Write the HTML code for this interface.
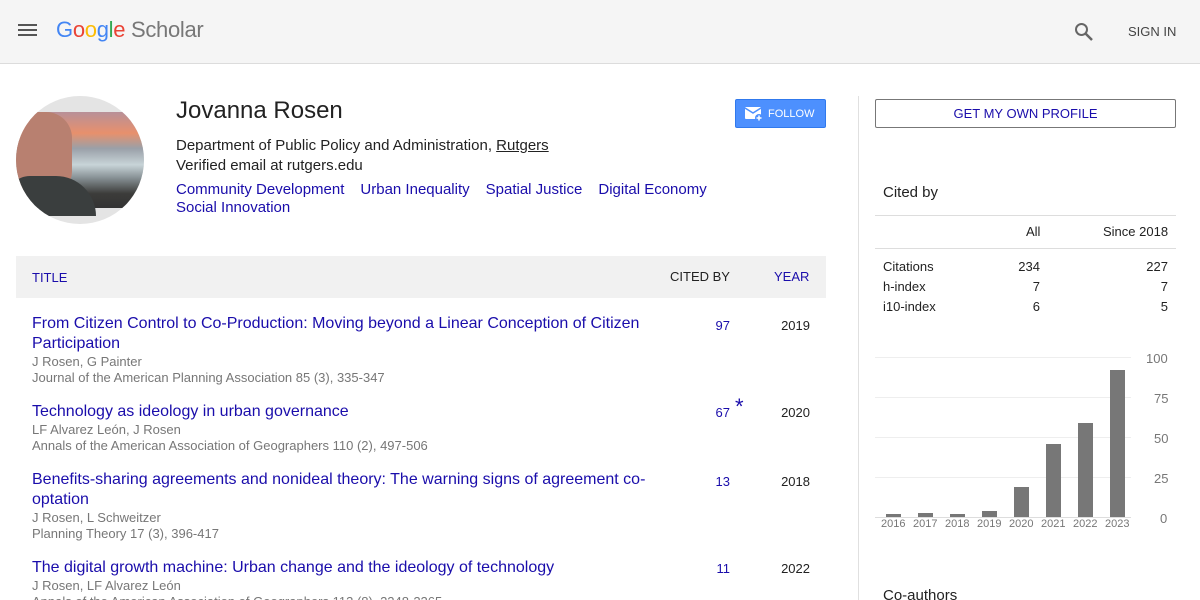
<!DOCTYPE html>
<html><head><meta charset="utf-8"><style>
*{margin:0;padding:0;box-sizing:border-box}
html,body{width:1200px;height:600px;overflow:hidden}
body{font-family:"Liberation Sans",Arial,sans-serif;background:#fff;color:#222;position:relative}
.hdr{position:absolute;left:0;top:0;width:1200px;height:64px;background:#f5f5f5;border-bottom:1px solid #dcdcdc}
.abs{position:absolute}
.row{position:absolute;left:32px;width:794px}
.t{font-size:16px;color:#1a0dab;line-height:20px}
.g{font-size:13px;color:#777;line-height:16px}
.c{position:absolute;right:96px;font-size:13px;color:#1a0dab}
.y{position:absolute;right:16px;font-size:13px;color:#222}
.grid{position:absolute;left:875px;width:256px;height:1px;background:#eee}
.bar{position:absolute;width:15px;background:#777}
.yl{position:absolute;left:1146px;font-size:13px;color:#777}
.xl{position:absolute;top:518px;font-size:11px;color:#777}
td{font-size:13px;height:20px}
</style></head><body>
<div class="hdr">
<div class="abs" style="left:18px;top:24px;width:19px;height:2px;background:#555;box-shadow:0 5px 0 #555,0 10px 0 #555"></div>
<div class="abs" style="left:56px;top:17px;font-size:22px;letter-spacing:-0.3px;line-height:26px"><span style="color:#4285f4">G</span><span style="color:#ea4335">o</span><span style="color:#fbbc05">o</span><span style="color:#4285f4">g</span><span style="color:#34a853">l</span><span style="color:#ea4335">e</span> <span style="color:#777">Scholar</span></div>
<svg class="abs" style="left:1072px;top:20px" width="24" height="24" viewBox="0 0 24 24"><circle cx="9.5" cy="9.5" r="5.5" fill="none" stroke="#666" stroke-width="2"/><path d="M13.5 13.5L20 20" stroke="#666" stroke-width="2.5"/></svg>
<div class="abs" style="left:1128px;top:24px;font-size:13px;color:#444">SIGN IN</div>
</div>
<div class="abs" style="left:16px;top:96px;width:128px;height:128px;border-radius:50%;background:#e4e4e4;overflow:hidden">
<div class="abs" style="left:0;top:16px;width:128px;height:96px;background:linear-gradient(180deg,#b89098 0%,#e8906c 22%,#9aa0a8 38%,#c8d4d8 55%,#8a9498 68%,#3c3c3a 85%,#333 100%)"></div>
<div class="abs" style="left:-4px;top:16px;width:60px;height:80px;border-radius:26px 26px 20px 20px;background:#b88070"></div>
<div class="abs" style="left:-10px;top:80px;width:90px;height:40px;background:#3a3e3e;border-radius:24px 40px 0 0"></div>
</div>
<div class="abs" style="left:176px;top:97px;font-size:24px;color:#222">Jovanna Rosen</div>
<div class="abs" style="left:176px;top:136px;font-size:15px;line-height:20px">Department of Public Policy and Administration, <u>Rutgers</u><br>Verified email at rutgers.edu</div>
<div class="abs" style="left:176px;top:181px;font-size:15px;line-height:18px;color:#1a0dab"><span style="margin-right:16px">Community Development</span><span style="margin-right:16px">Urban Inequality</span><span style="margin-right:16px">Spatial Justice</span>Digital Economy<br>Social Innovation</div>
<div class="abs" style="left:735px;top:99px;width:91px;height:29px;background:#4d90fe;border:1px solid #3079ed;border-radius:2px;color:#fff;font-size:11px;padding:8px 0 0 32px">FOLLOW</div>
<svg class="abs" style="left:744px;top:105px" width="20" height="18" viewBox="0 0 20 18"><rect x="1" y="2" width="16" height="12" rx="1" fill="#fff"/><path d="M1 3l8 5 8-5" stroke="#4d90fe" stroke-width="1.5" fill="none"/><circle cx="15" cy="13" r="4" fill="#4d90fe"/><path d="M15 10.5v5M12.5 13h5" stroke="#fff" stroke-width="1.5"/></svg>
<div class="abs" style="left:16px;top:256px;width:810px;height:42px;background:#f1f1f1;font-size:13px">
<span class="abs" style="left:16px;top:14px;color:#1a0dab">TITLE</span><span class="abs" style="left:654px;top:13px;color:#222">CITED BY</span><span class="abs" style="left:758px;top:13px;color:#1a0dab">YEAR</span></div>
<div class="row" style="top:314px"><div class="t">From Citizen Control to Co-Production: Moving beyond a Linear Conception of Citizen<br>Participation</div><div class="g">J Rosen, G Painter<br>Journal of the American Planning Association 85 (3), 335-347</div><span class="c" style="top:4px">97</span><span class="y" style="top:4px">2019</span></div>
<div class="row" style="top:402px"><div class="t">Technology as ideology in urban governance</div><div class="g">LF Alvarez León, J Rosen<br>Annals of the American Association of Geographers 110 (2), 497-506</div><span class="c" style="top:3px">67</span><span class="abs" style="left:703px;top:-8px;font-size:22px;color:#1a0dab">*</span><span class="y" style="top:3px">2020</span></div>
<div class="row" style="top:470px"><div class="t">Benefits-sharing agreements and nonideal theory: The warning signs of agreement co-<br>optation</div><div class="g">J Rosen, L Schweitzer<br>Planning Theory 17 (3), 396-417</div><span class="c" style="top:4px">13</span><span class="y" style="top:4px">2018</span></div>
<div class="row" style="top:558px"><div class="t">The digital growth machine: Urban change and the ideology of technology</div><div class="g">J Rosen, LF Alvarez León<br>Annals of the American Association of Geographers 113 (8), 2248-2265</div><span class="c" style="top:3px">11</span><span class="y" style="top:3px">2022</span></div>
<div class="abs" style="left:858px;top:96px;width:1px;height:504px;background:#e0e0e0"></div>
<div class="abs" style="left:875px;top:99px;width:301px;height:29px;border:1px solid #777;border-radius:2px;font-size:13px;color:#1a0dab;text-align:center;line-height:27px">GET MY OWN PROFILE</div>
<div class="abs" style="left:883px;top:184px;font-size:15px;color:#222">Cited by</div>
<div class="abs" style="left:875px;top:215px;width:301px;height:1px;background:#ddd"></div>
<div class="abs" style="left:875px;top:248px;width:301px;height:1px;background:#ddd"></div>
<div class="abs" style="left:1026px;top:224px;font-size:13px">All</div>
<div class="abs" style="left:1103px;top:224px;font-size:13px">Since 2018</div>
<table class="abs" style="left:883px;top:256px;width:285px;border-collapse:collapse">
<tr><td>Citations</td><td style="text-align:right;width:90px">234</td><td style="text-align:right;width:128px">227</td></tr>
<tr><td>h-index</td><td style="text-align:right">7</td><td style="text-align:right">7</td></tr>
<tr><td>i10-index</td><td style="text-align:right">6</td><td style="text-align:right">5</td></tr></table>
<div class="grid" style="top:357px"></div><div class="grid" style="top:397px"></div><div class="grid" style="top:437px"></div><div class="grid" style="top:477px"></div><div class="grid" style="top:517px;background:#ddd"></div>
<div class="yl" style="top:351px">100</div><div class="yl" style="top:391px;left:1154px">75</div><div class="yl" style="top:431px;left:1154px">50</div><div class="yl" style="top:471px;left:1154px">25</div><div class="yl" style="top:511px;left:1160px">0</div>
<div class="bar" style="left:886px;top:514px;height:3px"></div>
<div class="bar" style="left:918px;top:513px;height:4px"></div>
<div class="bar" style="left:950px;top:514px;height:3px"></div>
<div class="bar" style="left:982px;top:511px;height:6px"></div>
<div class="bar" style="left:1014px;top:487px;height:30px"></div>
<div class="bar" style="left:1046px;top:444px;height:73px"></div>
<div class="bar" style="left:1078px;top:423px;height:94px"></div>
<div class="bar" style="left:1110px;top:370px;height:147px"></div>
<span class="xl" style="left:881px">2016</span><span class="xl" style="left:913px">2017</span><span class="xl" style="left:945px">2018</span><span class="xl" style="left:977px">2019</span><span class="xl" style="left:1009px">2020</span><span class="xl" style="left:1041px">2021</span><span class="xl" style="left:1073px">2022</span><span class="xl" style="left:1105px">2023</span>
<div class="abs" style="left:883px;top:587px;font-size:15px">Co-authors</div>
</body></html>
